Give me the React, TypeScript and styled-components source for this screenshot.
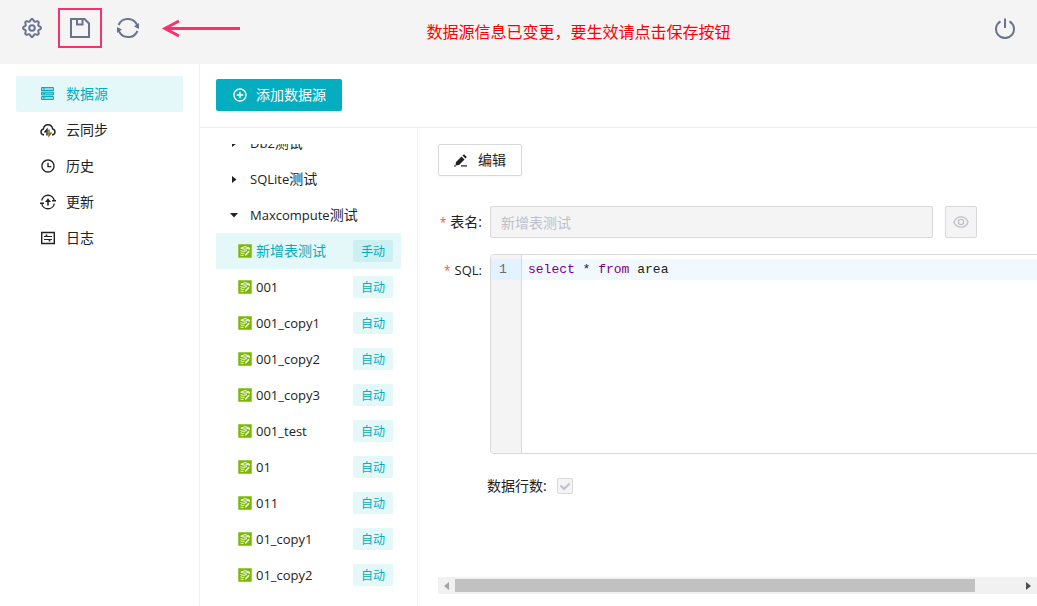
import React, { useLayoutEffect, useRef } from "react";
import styled, { createGlobalStyle } from "styled-components";
import { RiAddCircleLine, RiTimeLine } from "react-icons/ri";

const GlobalStyle = createGlobalStyle`
  *, *::before, *::after { box-sizing: border-box; }
  body {
    margin: 0;
    background: #fff;
    color: #222;
    font: 14px/20px "Open Sans", "Noto Sans CJK SC", sans-serif;
  }
  button, input { font: inherit; color: inherit; }
  button { cursor: pointer; }
  svg { display: block; flex: none; }
`;

const Page = styled.div`
  display: flex;
  flex-direction: column;
  height: 100vh;
  overflow: hidden;
`;

const Header = styled.header`
  display: flex;
  align-items: center;
  height: 64px;
  flex: none;
  padding: 0 8px 0 10px;
  background: #f4f4f4;
  color: #69738c;
`;

const HeaderTools = styled.div`
  display: flex;
  align-items: center;
  gap: 4px;
  padding-bottom: 8px;
`;

const IconButton = styled.button<{ $marked?: boolean }>`
  display: flex;
  align-items: center;
  justify-content: center;
  width: 44px;
  height: 40px;
  padding: 0;
  background: none;
  border: 2px solid ${(p) => (p.$marked ? "#f5326e" : "transparent")};
`;

const Notice = styled.p`
  flex: 1;
  margin: 0;
  text-align: center;
  font-size: 16px;
  line-height: 24px;
  color: #ff0000;
`;

const HeaderEnd = styled.div`
  display: flex;
  justify-content: flex-end;
  width: 112px;
  padding: 0 2px 8px 0;
`;

const Body = styled.div`
  display: flex;
  flex: 1;
  min-height: 0;
`;

const Sidebar = styled.nav`
  width: 200px;
  flex: none;
  padding: 12px 16px;
  border-right: 1px solid #f0f0f0;
`;

const NavLink = styled.a<{ $active?: boolean }>`
  display: flex;
  align-items: center;
  gap: 10px;
  height: 36px;
  padding-left: 24px;
  border-radius: 2px;
  text-decoration: none;
  color: ${(p) => (p.$active ? "#04adc0" : "#222")};
  background: ${(p) => (p.$active ? "#e4f7f9" : "transparent")};
`;

const Main = styled.main`
  display: flex;
  flex-direction: column;
  flex: 1;
  min-width: 0;
`;

const Toolbar = styled.div`
  display: flex;
  align-items: flex-start;
  height: 64px;
  flex: none;
  padding: 15px 16px;
  border-bottom: 1px solid #f0f0f0;
`;

const PrimaryButton = styled.button`
  display: flex;
  align-items: center;
  gap: 8px;
  height: 32px;
  padding: 0 16px;
  border: 0;
  border-radius: 2px;
  background: #04adc0;
  color: #fff;
  box-shadow: 0 2px 0 rgba(0, 0, 0, 0.04);
`;

const Columns = styled.div`
  display: flex;
  flex: 1;
  min-height: 0;
`;

const TreePanel = styled.section`
  display: flex;
  width: 218px;
  flex: none;
  padding: 16px 16px 12px;
  border-right: 1px solid #f0f0f0;
`;

const TreeList = styled.ul`
  flex: 1;
  margin: 0;
  padding: 0 0 8px;
  list-style: none;
  overflow-y: auto;
  scrollbar-width: none;
`;

const GroupRow = styled.li`
  display: flex;
  align-items: center;
  gap: 12px;
  height: 36px;
  padding-left: 14px;
`;

const TableRow = styled.li<{ $active?: boolean }>`
  display: flex;
  align-items: center;
  gap: 4px;
  height: 36px;
  padding: 0 8px 0 22px;
  color: ${(p) => (p.$active ? "#04adc0" : "#222")};
  background: ${(p) => (p.$active ? "#e4f7f9" : "transparent")};
`;

const TableName = styled.span`
  flex: 1;
`;

const Latin = styled.span`
  font-size: 13px;
`;

const Tag = styled.span<{ $active?: boolean }>`
  width: 40px;
  padding-top: 1px;
  border-radius: 2px;
  text-align: center;
  font-size: 12px;
  line-height: 21px;
  color: #04adc0;
  background: ${(p) => (p.$active ? "#cceff2" : "#e4f7f9")};
`;

const Detail = styled.section`
  display: flex;
  flex-direction: column;
  flex: 1;
  min-width: 0;
  padding: 16px 0 12px 20px;
`;

const FormScroll = styled.div`
  flex: 1;
  min-height: 0;
  overflow: auto;
  scrollbar-width: none;
`;

const Form = styled.form`
  width: 109%;
`;

const EditButton = styled.button`
  display: flex;
  align-items: center;
  gap: 10px;
  height: 32px;
  margin-bottom: 30px;
  padding: 0 15px;
  border: 1px solid #d9d9d9;
  border-radius: 2px;
  background: #fff;
  box-shadow: 0 2px 0 rgba(0, 0, 0, 0.02);
`;

const Field = styled.div`
  display: flex;
  margin-bottom: 16px;
`;

const Label = styled.label<{ $required?: boolean }>`
  width: 52px;
  height: 32px;
  flex: none;
  padding-right: 8px;
  text-align: right;
  line-height: 32px;
  white-space: nowrap;
  &::before {
    content: ${(p) => (p.$required ? '"*"' : "none")};
    margin-right: 4px;
    font-size: 12px;
    color: #ff4d4f;
  }
`;

const NameControls = styled.div`
  display: flex;
  flex: 1;
  gap: 12px;
  padding-right: 114px;
`;

const TextInput = styled.input`
  flex: 1;
  min-width: 0;
  height: 32px;
  padding: 0 10px;
  border: 1px solid #d9d9d9;
  border-radius: 2px;
  background: #f4f4f4;
  color: #bfbfcb;
`;

const PreviewButton = styled.button`
  display: flex;
  align-items: center;
  justify-content: center;
  width: 32px;
  height: 32px;
  padding: 0;
  border: 1px solid #d9d9d9;
  border-radius: 2px;
  background: #f4f4f4;
  color: #bfbfcb;
`;

const Editor = styled.div`
  display: flex;
  flex: 1;
  height: 200px;
  border: 1px solid #d9d9d9;
  border-radius: 4px;
  overflow: hidden;
  font: 13px/20px "Liberation Mono", monospace;
`;

const Gutter = styled.div`
  width: 31px;
  flex: none;
  padding-top: 4px;
  border-right: 1px solid #d9d9d9;
  background: #f4f4f4;
`;

const LineNumber = styled.div`
  padding: 1px 6px 0 0;
  text-align: center;
  color: #6c6c6c;
  background: #e2f2ff;
`;

const Code = styled.div`
  flex: 1;
  padding-top: 4px;
  outline: none;
`;

const CodeLine = styled.div`
  padding: 1px 0 0 6px;
  white-space: pre;
  background: #f1f9ff;
`;

const Keyword = styled.span`
  color: #770088;
`;

const CheckField = styled.div`
  display: flex;
  align-items: center;
  gap: 10px;
  height: 32px;
  padding-left: 49px;
`;

const CheckBox = styled.span`
  display: grid;
  width: 16px;
  height: 16px;
  place-items: center;
  & > * { grid-area: 1 / 1; }
  & > svg { pointer-events: none; }
`;

const CheckInput = styled.input`
  appearance: none;
  width: 16px;
  height: 16px;
  margin: 0;
  border: 1px solid #d9d9d9;
  border-radius: 2px;
  background: #f4f4f4;
`;

const ScrollBar = styled.div`
  display: flex;
  align-items: center;
  height: 17px;
  flex: none;
  background: #f1f1f1;
`;

const ScrollArrow = styled.button`
  display: flex;
  align-items: center;
  justify-content: center;
  width: 17px;
  height: 17px;
  padding: 0;
  border: 0;
  background: none;
`;

const ScrollTrack = styled.div`
  flex: 1;
`;

const ScrollThumb = styled.div`
  width: 92%;
  height: 13px;
  background: #c1c1c1;
`;

const gearOutline = Array.from({ length: 72 }, (_, i) => {
  const angle = (i / 72) * Math.PI * 2;
  const radius = 7.9 + 1.1 * Math.cos(8 * angle);
  const x = 11 + radius * Math.sin(angle);
  const y = 11 - radius * Math.cos(angle);
  return `${x.toFixed(2)},${y.toFixed(2)}`;
}).join(" ");

const GearIcon = () => (
  <svg width="22" height="22" viewBox="0 0 22 22" fill="none" stroke="currentColor" strokeWidth="2">
    <polygon points={gearOutline} strokeLinejoin="round" />
    <circle cx="11" cy="11" r="2.800" />
  </svg>
);

const SaveIcon = () => (
  <svg width="22" height="22" viewBox="0 0 22 22" fill="none" stroke="currentColor" strokeWidth="2">
    <path d="M2 2h13.500l4.500 4.500V20H2z" />
    <path d="M8 2v5.500h5.500V2" />
  </svg>
);

const SyncIcon = () => (
  <svg width="24" height="24" viewBox="0 0 24 24" fill="none" stroke="currentColor" strokeWidth="2">
    <path d="M2.600 9A10 10 0 0 1 21.500 10.500" />
    <path d="M21.400 15A10 10 0 0 1 2.500 13.500" />
    <path d="M23 7v6l-5-2.400z M1 17v-6l5 2.400z" fill="currentColor" stroke="none" />
  </svg>
);

const ArrowIcon = () => (
  <svg width="86" height="20" viewBox="0 0 86 20" fill="none" stroke="#f5326e" strokeWidth="3">
    <path d="M11 10.500H86" />
    <path d="M25 3L11 10.500l14 7.500" />
  </svg>
);

const PowerIcon = () => (
  <svg width="22" height="22" viewBox="0 0 22 22" fill="none" stroke="currentColor" strokeWidth="2">
    <path d="M6.500 4.300a9 9 0 1 0 9 0" />
    <path d="M11 1.500V11" />
  </svg>
);

const DatabaseIcon = () => (
  <svg width="16" height="16" viewBox="0 0 16 16" fill="none" stroke="currentColor">
    <path d="M1.500 1.500h12v3h-12z M1.500 10.500h12v3h-12z" fill="#8fd7df" />
    <path d="M1.500 6h12v3h-12z" fill="#6cc9d3" />
    <path d="M3 3h2M3 7.500h2M3 12h2" />
  </svg>
);

const CloudIcon = () => (
  <svg width="16" height="16" viewBox="0 0 16 16" fill="none" stroke="currentColor" strokeWidth="1.400">
    <path d="M4 13C2.200 12.800 1 11.500 1 10c0-1.600 1-2.700 2.400-3C3.800 4.300 5.600 2.800 8 2.800s4.200 1.500 4.600 4.200C14 7.300 15 8.400 15 10c0 1.500-1.200 2.800-3 3" />
    <path d="M7 13.500V7.500L4.500 10.500" />
    <path d="M9 7.500v6l2.500-3" stroke="#7d5a1e" />
  </svg>
);

const UpdateIcon = () => (
  <svg width="16" height="16" viewBox="0 0 16 16" fill="none" stroke="currentColor" strokeWidth="1.400">
    <path d="M1.700 6.500A6.400 6.400 0 0 1 14.300 6.500M14.300 9.500A6.400 6.400 0 0 1 1.700 9.500" />
    <path d="M0 9.300h4M12 6.700h4" />
    <path d="M8 11.500V6" strokeWidth="1.600" />
    <path d="M8 4.200L11 8H5z" fill="currentColor" stroke="none" />
  </svg>
);

const LogIcon = () => (
  <svg width="16" height="16" viewBox="0 0 16 16" fill="none" stroke="currentColor" strokeWidth="1.400">
    <path d="M1.700 2.500h12.600v11H1.700z" />
    <path d="M4 6.500h8M4 9.500h8" strokeWidth="1.200" />
    <path d="M6.500 4.500v2.500M9.500 9v2.500" strokeWidth="1.600" />
  </svg>
);

const TableIcon = () => (
  <svg width="14" height="14" viewBox="0 0 14 14" fill="none" stroke="#fff">
    <path d="M0 0h14v14H0z" fill="#76b900" stroke="#c4e08d" />
    <path d="M2.800 4.200L7 2.600l4.200 1.400L7 5.300z" />
    <path d="M2.500 6.500c1.500 1 4 1 6.500 0M2.500 8.800c1 .6 2.500.7 4 .4M2.500 11c.8.500 1.800.600 3 .4M11.300 4v2" />
    <path d="M7.300 11.300l3.700-4" strokeWidth="1.500" />
  </svg>
);

const PencilIcon = () => (
  <svg width="14" height="14" viewBox="0 0 14 14" fill="currentColor">
    <path d="M2 9L7.500 3.500l3 3L5 12l-3.500.5z M8.500 2.600L10 1.200l2.800 2.800-1.400 1.400z" />
    <path d="M0 12.500h2v1H0z M7 12.200h6v1.200H7z" />
  </svg>
);

const EyeIcon = () => (
  <svg width="16" height="16" viewBox="0 0 16 16" fill="none" stroke="currentColor" strokeWidth="1.300">
    <path d="M.8 8C2.200 4.600 4.800 2.800 8 2.800S13.800 4.600 15.200 8C13.800 11.400 11.200 13.200 8 13.200S2.200 11.400.8 8z" />
    <circle cx="8" cy="8" r="2.600" />
  </svg>
);

const Caret = ({ open }: { open?: boolean }) => (
  <svg width="8" height="8" viewBox="0 0 8 8" fill="currentColor">
    <path d={open ? "M0 2h8L4 6.500z" : "M2 1l4.500 3.500L2 8z"} />
  </svg>
);

const navItems = [
  { label: "数据源", icon: <DatabaseIcon />, active: true },
  { label: "云同步", icon: <CloudIcon /> },
  { label: "历史", icon: <RiTimeLine size={16} /> },
  { label: "更新", icon: <UpdateIcon /> },
  { label: "日志", icon: <LogIcon /> },
];

const groups = [
  { latin: "Db2", open: false },
  { latin: "SQLite", open: false },
  { latin: "Maxcompute", open: true },
];

const tables = ["001", "001_copy1", "001_copy2", "001_copy3", "001_test", "01", "011", "01_copy1", "01_copy2"];

export default function App() {
  const listRef = useRef<HTMLUListElement>(null);

  useLayoutEffect(() => {
    if (listRef.current) listRef.current.scrollTop = 19;
  }, []);

  return (
    <Page>
      <GlobalStyle />
      <Header>
        <HeaderTools>
          <IconButton aria-label="设置"><GearIcon /></IconButton>
          <IconButton aria-label="保存" $marked><SaveIcon /></IconButton>
          <IconButton aria-label="刷新"><SyncIcon /></IconButton>
          <ArrowIcon />
        </HeaderTools>
        <Notice role="status">数据源信息已变更，要生效请点击保存按钮</Notice>
        <HeaderEnd>
          <IconButton aria-label="退出"><PowerIcon /></IconButton>
        </HeaderEnd>
      </Header>
      <Body>
        <Sidebar>
          {navItems.map((item) => (
            <NavLink key={item.label} href="#" $active={item.active}>
              {item.icon}
              {item.label}
            </NavLink>
          ))}
        </Sidebar>
        <Main>
          <Toolbar>
            <PrimaryButton><RiAddCircleLine size={16} />添加数据源</PrimaryButton>
          </Toolbar>
          <Columns>
            <TreePanel>
              <TreeList ref={listRef}>
                {groups.map((group) => (
                  <GroupRow key={group.latin}>
                    <Caret open={group.open} />
                    <span><Latin>{group.latin}</Latin>测试</span>
                  </GroupRow>
                ))}
                <TableRow $active>
                  <TableIcon />
                  <TableName>新增表测试</TableName>
                  <Tag $active>手动</Tag>
                </TableRow>
                {tables.map((name) => (
                  <TableRow key={name}>
                    <TableIcon />
                    <TableName><Latin>{name}</Latin></TableName>
                    <Tag>自动</Tag>
                  </TableRow>
                ))}
              </TreeList>
            </TreePanel>
            <Detail>
              <FormScroll>
                <Form onSubmit={(e) => e.preventDefault()}>
                  <EditButton type="button"><PencilIcon />编辑</EditButton>
                  <Field>
                    <Label htmlFor="table-name" $required>表名:</Label>
                    <NameControls>
                      <TextInput id="table-name" value="新增表测试" disabled readOnly />
                      <PreviewButton type="button" aria-label="预览" disabled><EyeIcon /></PreviewButton>
                    </NameControls>
                  </Field>
                  <Field>
                    <Label as="span" id="sql-label" $required><Latin>SQL:</Latin></Label>
                    <Editor>
                      <Gutter><LineNumber>1</LineNumber></Gutter>
                      <Code role="textbox" aria-multiline="true" aria-readonly="true" aria-labelledby="sql-label" tabIndex={0}>
                        <CodeLine><Keyword>select</Keyword> * <Keyword>from</Keyword> area</CodeLine>
                      </Code>
                    </Editor>
                  </Field>
                  <CheckField>
                    <label htmlFor="row-count">数据行数:</label>
                    <CheckBox>
                      <CheckInput id="row-count" type="checkbox" defaultChecked disabled />
                      <svg width="12" height="12" viewBox="0 0 12 12" fill="none" stroke="#bfbfcb" strokeWidth="2">
                        <path d="M1.500 5.500l3.500 3.500 5.500-5.500" />
                      </svg>
                    </CheckBox>
                  </CheckField>
                </Form>
              </FormScroll>
              <ScrollBar>
                <ScrollArrow aria-label="向左滚动">
                  <svg width="5" height="8" viewBox="0 0 5 8" fill="#a3a3a3"><path d="M5 0v8L0 4z" /></svg>
                </ScrollArrow>
                <ScrollTrack><ScrollThumb /></ScrollTrack>
                <ScrollArrow aria-label="向右滚动">
                  <svg width="5" height="8" viewBox="0 0 5 8" fill="#505050"><path d="M0 0v8l5-4z" /></svg>
                </ScrollArrow>
              </ScrollBar>
            </Detail>
          </Columns>
        </Main>
      </Body>
    </Page>
  );
}
